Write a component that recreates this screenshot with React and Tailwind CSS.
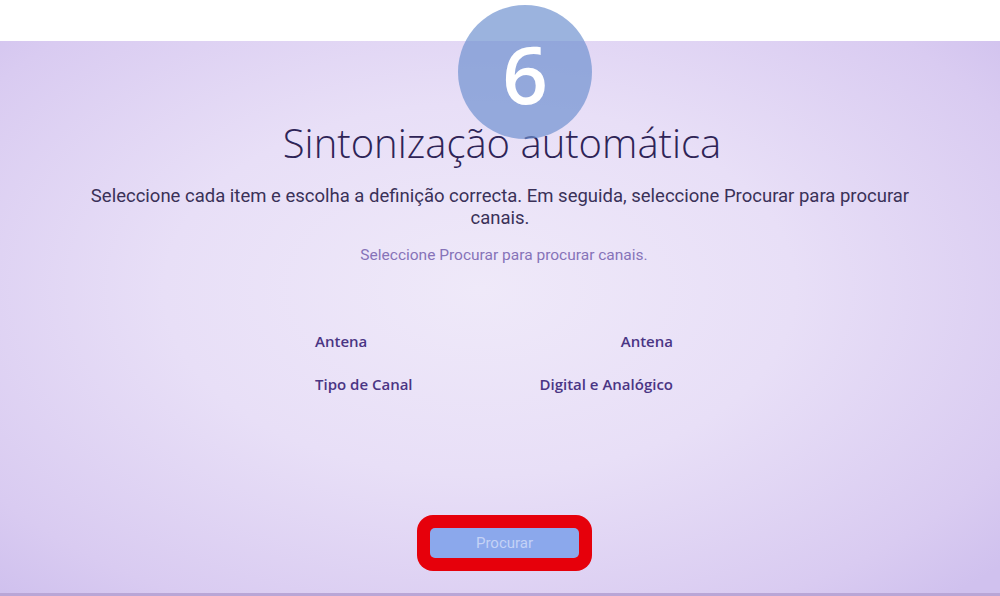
export default function App() {
  return (
    <div className="relative w-[1000px] h-[596px] bg-white overflow-hidden flex flex-col" style={{ fontFamily: '"Open Sans", "Noto Sans", sans-serif' }}>
      <div className="h-[41px] bg-white shrink-0" />
      <div className="flex-1 flex flex-col items-center bg-[radial-gradient(ellipse_70%_75%_at_48%_45%,#efe9f9_0%,#e8dff7_45%,#d9cbf1_85%,#d0c1ee_100%)] border-b-[3px] border-[#b9a6d6]">
        <h1 className="mt-[78px] ml-[4px] text-[40px] leading-[48px] font-light text-[#2e2456] tracking-[0px]">Sintonização automática</h1>
        <p className="mt-[18px] w-[836px] text-center text-[18.5px] leading-[22px] text-[#3a3158] tracking-[0px]" style={{ fontFamily: 'Roboto, "Noto Sans", sans-serif' }}>
          Seleccione cada item e escolha a definição correcta. Em seguida, seleccione Procurar para procurar canais.
        </p>
        <p className="mt-[16px] ml-[8px] text-[15.5px] leading-[20px] text-[#8673b8] tracking-[0px]" style={{ fontFamily: 'Roboto, "Noto Sans", sans-serif' }}>
          Seleccione Procurar para procurar canais.
        </p>
        <div className="mt-[66px] w-[358px] ml-[-12px] flex flex-col gap-[23px] text-[15px] leading-[20px] font-semibold text-[#4a3584]">
          <div className="flex justify-between"><span>Antena</span><span>Antena</span></div>
          <div className="flex justify-between"><span>Tipo de Canal</span><span>Digital e Analógico</span></div>
        </div>
        <div className="mt-[121px] ml-[9px] p-[13px] rounded-[16px] bg-[#e6000b]">
          <div className="w-[149px] h-[30px] rounded-[5px] bg-[#8ba8ec] flex items-center justify-center text-[15px] text-[#c4d2f6]" style={{ fontFamily: 'Roboto, "Noto Sans", sans-serif' }}>Procurar</div>
        </div>
      </div>
      <div className="absolute left-[458px] top-[5px] w-[134px] h-[134px] rounded-full bg-[rgba(108,143,206,0.68)] flex items-center justify-center">
        <span className="text-white text-[80px] leading-none font-semibold mt-[2px]">6</span>
      </div>
    </div>
  );
}
